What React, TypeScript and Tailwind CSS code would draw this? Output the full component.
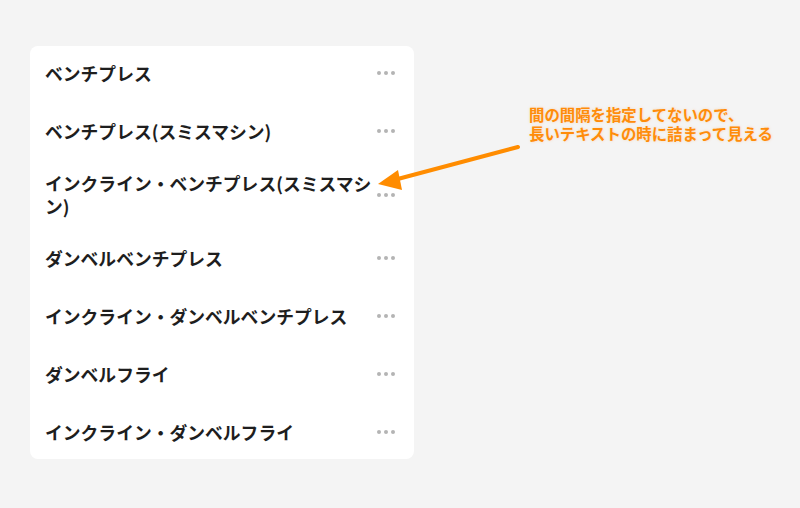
const items = [
  "ベンチプレス",
  "ベンチプレス(スミスマシン)",
  "インクライン・ベンチプレス(スミスマシン)",
  "ダンベルベンチプレス",
  "インクライン・ダンベルベンチプレス",
  "ダンベルフライ",
  "インクライン・ダンベルフライ",
];

const MoreDots = () => (
  <div className="flex items-center gap-[3px] shrink-0">
    <span className="w-[4px] h-[4px] rounded-full bg-[#b4b4b4]" />
    <span className="w-[4px] h-[4px] rounded-full bg-[#b4b4b4]" />
    <span className="w-[4px] h-[4px] rounded-full bg-[#b4b4b4]" />
  </div>
);

const Annotation = () => (
  <div className="absolute left-0 top-0 w-[800px] h-[508px] pointer-events-none">
    <svg width="800" height="508" className="absolute left-0 top-0">
      <line x1="518" y1="147" x2="394" y2="180" stroke="#ff8c00" strokeWidth="4" strokeLinecap="round" />
      <polygon points="378,184 398,170 402,190" fill="#ff8c00" />
    </svg>
    <div className="absolute left-[529px] top-[105px] flex flex-col text-[15.4px] leading-[19px] font-bold text-[#ff8c0a] [text-shadow:0_0_3px_rgba(255,140,0,0.25)]">
      <span>間の間隔を指定してないので、</span>
      <span>長いテキストの時に詰まって見える</span>
    </div>
  </div>
);

export default function App() {
  return (
    <div
      className="relative w-[800px] h-[508px] bg-[#f4f4f4] pt-[46px] pl-[30px]"
      style={{ fontFamily: '"Noto Sans CJK JP", "Noto Sans", sans-serif' }}
    >
      <ul className="w-[384px] bg-white rounded-lg flex flex-col gap-[4px]">
        {items.map((name) => (
          <li
            key={name}
            className="flex items-center justify-between min-h-[54px] pl-[15px] pr-[19px] py-[10px]"
          >
            <span className="text-[17.8px] leading-[22.5px] font-bold text-[#1e1e1e] w-[332px]">{name}</span>
            <MoreDots />
          </li>
        ))}
      </ul>
      <Annotation />
    </div>
  );
}
